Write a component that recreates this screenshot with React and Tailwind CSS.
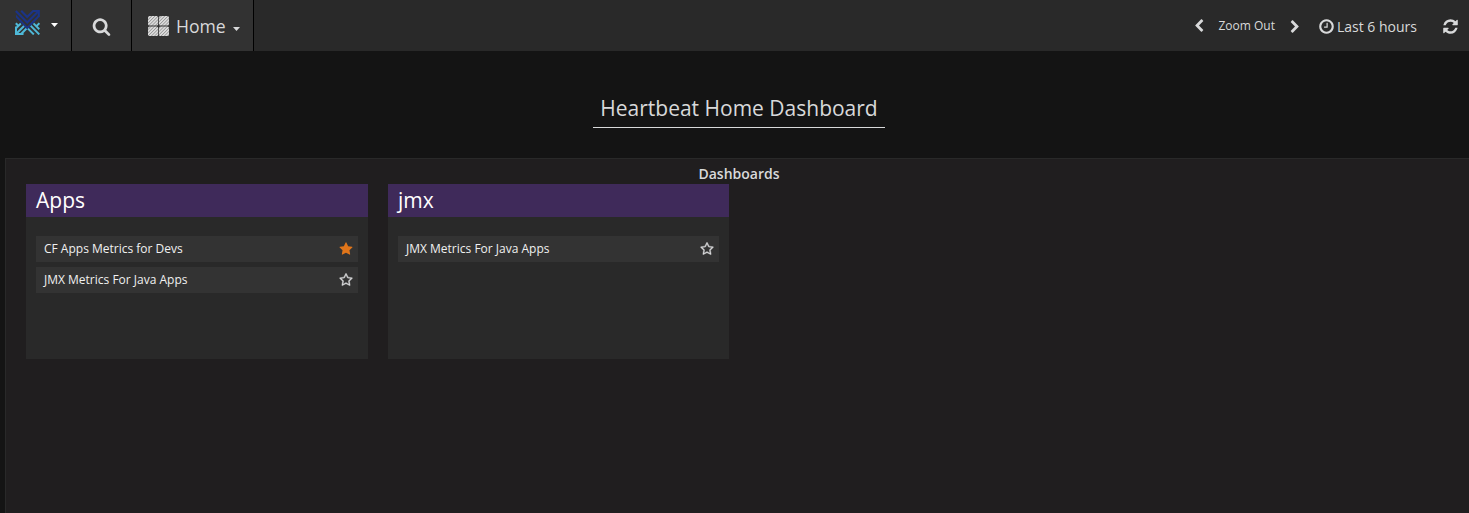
import React from "react";

const PATHS = {
  search:
    "M1216 832q0-185-131.5-316.5t-316.5-131.5-316.5 131.5-131.5 316.5 131.5 316.5 316.5 131.5 316.5-131.5 131.5-316.5zm512 832q0 52-38 90t-90 38q-54 0-90-38l-343-342q-179 124-399 124-143 0-273.5-55.5t-225-150-150-225-55.5-273.5 55.5-273.5 150-225 225-150 273.5-55.5 273.5 55.5 225 150 150 225 55.5 273.5q0 220-124 399l343 343q37 37 37 90z",
  star: "M1728 647q0 22-26 48l-363 354 86 500q1 7 1 20 0 21-10.5 35.5t-30.5 14.5q-19 0-40-12l-449-236-449 236q-22 12-40 12-21 0-31.5-14.5t-10.5-35.5q0-6 2-20l86-500-364-354q-25-27-25-48 0-37 56-46l502-73 225-455q19-41 49-41t49 41l225 455 502 73q56 9 56 46z",
  starOutline:
    "M1201 1004l306-297-422-62-189-382-189 382-422 62 306 297-73 421 378-199 377 199zm527-357q0 22-26 48l-363 354 86 500q1 7 1 20 0 50-41 50-19 0-40-12l-449-236-449 236q-22 12-40 12-21 0-31.5-14.5t-10.5-35.5q0-6 2-20l86-500-364-354q-25-27-25-48 0-37 56-46l502-73 225-455q19-41 49-41t49 41l225 455 502 73q56 9 56 46z",
  clock:
    "M1024 544v448q0 14-9 23t-23 9h-320q-14 0-23-9t-9-23v-64q0-14 9-23t23-9h224v-352q0-14 9-23t23-9h64q14 0 23 9t9 23zm416 352q0-148-73-273t-198-198-273-73-273 73-198 198-73 273 73 273 198 198 273 73 273-73 198-198 73-273zm224 0q0 209-103 385.5t-279.5 279.5-385.5 103-385.5-103-279.5-279.5-103-385.5 103-385.5 279.5-279.5 385.5-103 385.5 103 279.5 279.5 103 385.5z",
  refresh:
    "M1639 1056q0 5-1 7-64 268-268 434.5t-478 166.5q-146 0-282.5-55t-243.5-157l-129 129q-19 19-45 19t-45-19-19-45v-448q0-26 19-45t45-19h448q26 0 45 19t19 45-19 45l-137 137q71 66 161 102t187 36q134 0 250-65t186-179q11-17 53-117 8-23 30-23h192q13 0 22.5 9.5t9.5 22.5zm25-800v448q0 26-19 45t-45 19h-448q-26 0-45-19t-19-45 19-45l138-138q-148-137-349-137-134 0-250 65t-186 179q-11 17-53 117-8 23-30 23h-199q-13 0-22.5-9.5t-9.5-22.5v-7q65-268 270-434.5t480-166.5q146 0 284 55.5t245 156.5l130-129q19-19 45-19t45 19 19 45z",
  chevronLeft:
    "M1427 301l-531 531 531 531q19 19 19 45t-19 45l-166 166q-19 19-45 19t-45-19l-742-742q-19-19-19-45t19-45l742-742q19-19 45-19t45 19l166 166q19 19 19 45t-19 45z",
};

function Icon({ name, className }) {
  return (
    <svg viewBox="0 0 1792 1792" fill="currentColor" className={`shrink-0 ${className}`}>
      <path d={PATHS[name]} />
    </svg>
  );
}

function Caret({ className }) {
  return (
    <svg viewBox="0 0 7 4" fill="currentColor" className={`h-1 w-[7px] shrink-0 ${className}`}>
      <path d="M0 0h7L3.5 4z" />
    </svg>
  );
}

function Logo() {
  return (
    <svg viewBox="0 0 25 25" fill="none" className="size-[25px] shrink-0">
      <g stroke="#4fb9d8" strokeWidth="2">
        <path d="M1 16.5v7.4h7.5" />
        <path d="M1 24l8.5-8.5M.7 18.6L5.8 13.5M5.8 24.3l6.5-6.5M.8 13.2l3 3" />
        <path d="M18.5 13.4l5.8 5.8M15.3 15.4l9 9M12 17.6l6.8 6.8M21 16.6l3.4-3.4" />
      </g>
      <path d="M1 4.8L12.2 16.4 23.8 4.8v2.6L12.2 19.6 1 7.4z" fill="#1b3487" />
      <g stroke="#1b3487" strokeWidth="2.1">
        <path d="M.8 .9L12.2 12.6 23.4 1.2" />
        <path d="M6.2 .8l6 6.2 6-6h5.6v6" />
      </g>
    </svg>
  );
}

function DashboardIcon() {
  return (
    <svg viewBox="0 0 21 20" className="h-5 w-[21px] shrink-0">
      <defs>
        <pattern id="hatch" width="2.3" height="2.3" patternUnits="userSpaceOnUse" patternTransform="rotate(45)">
          <rect width="2.3" height="2.3" fill="#dedede" />
          <rect width="0.8" height="2.3" fill="#959595" />
        </pattern>
      </defs>
      <g fill="url(#hatch)">
        <rect x="0" y="0" width="10.1" height="9.6" rx="1.5" />
        <rect x="10.9" y="0" width="10.1" height="9.6" rx="1.5" />
        <rect x="0" y="10.4" width="10.1" height="9.6" rx="1.5" />
        <rect x="10.9" y="10.4" width="10.1" height="9.6" rx="1.5" />
      </g>
    </svg>
  );
}

function Navbar() {
  return (
    <header className="flex h-[51px] items-stretch bg-[#292929] text-[#d8d9da]">
      <button className="flex w-[72px] items-start border-r border-black bg-[#323232] pl-[15px] pt-[10px]">
        <Logo />
        <Caret className="mt-[13px] ml-[11px] text-white" />
      </button>
      <button className="flex w-[60px] items-center border-r border-black bg-[#323232] pl-[20px] pt-[2px]">
        <Icon name="search" className="size-[19px]" />
      </button>
      <button className="flex w-[122px] items-center border-r border-black bg-[#323232] pl-4 pt-px">
        <DashboardIcon />
        <span className="ml-[7px] text-[17.6px] leading-6">Home</span>
        <Caret className="mt-[6px] ml-[7px]" />
      </button>
      <div className="ml-auto flex items-center pr-[10px] pt-[1px]">
        <Icon name="chevronLeft" className="size-[14px]" />
        <span className="ml-[12px] text-[12px]">Zoom Out</span>
        <Icon name="chevronLeft" className="ml-[13px] size-[14px] rotate-180" />
        <Icon name="clock" className="ml-[16px] size-[17px]" />
        <span className="ml-[2px] pt-[1px] text-[14px]">Last 6 hours</span>
        <Icon name="refresh" className="ml-[25px] size-[17px]" />
      </div>
    </header>
  );
}

function DashboardList({ title, items, className }) {
  return (
    <section className={`h-[175px] bg-[#292929] ${className}`}>
      <h3 className="h-[33px] bg-[#3f2a5a] pl-[10px] text-[21px] leading-[32px] text-white">{title}</h3>
      <ul className="flex flex-col gap-[5px] px-[10px] pt-[19px]">
        {items.map((item) => (
          <li
            key={item.name}
            className="flex h-[26px] items-center justify-between bg-[#333333] pl-2 pr-[5px] text-[12px] text-[#f0f0f0]"
          >
            <span>{item.name}</span>
            <Icon
              name={item.starred ? "star" : "starOutline"}
              className={
                item.starred ? "size-[14px] text-[#e0751a]" : "size-[14px] stroke-current stroke-[50] text-[#d8d9da]"
              }
            />
          </li>
        ))}
      </ul>
    </section>
  );
}

export default function App() {
  return (
    <div className="flex h-[513px] flex-col overflow-hidden bg-[#141414] font-['Open_Sans','Noto_Sans',sans-serif]">
      <Navbar />
      <div className="flex h-[107px] shrink-0 justify-center pt-[40px] pl-[9px]">
        <h1 className="h-[37px] w-[292px] border-b border-[#d8d9da] text-center text-[21px] leading-[34px] whitespace-nowrap text-[#d8d9da]">
          Heartbeat Home Dashboard
        </h1>
      </div>
      <main className="ml-[5px] flex-1 border-t border-l border-[#292929] bg-[#201e1f]">
        <h2 className="h-[25px] pt-[5px] pl-[3px] text-center text-[14px] leading-5 font-semibold text-[#d8d9da]">
          Dashboards
        </h2>
        <div className="flex gap-5 pl-5">
          <DashboardList
            title="Apps"
            className="w-[342px]"
            items={[{ name: "CF Apps Metrics for Devs", starred: true }, { name: "JMX Metrics For Java Apps" }]}
          />
          <DashboardList title="jmx" className="w-[341px]" items={[{ name: "JMX Metrics For Java Apps" }]} />
        </div>
      </main>
    </div>
  );
}
